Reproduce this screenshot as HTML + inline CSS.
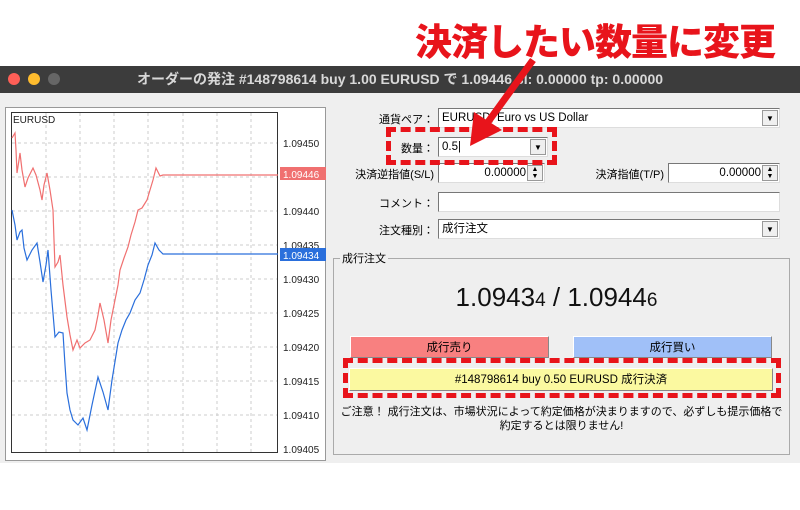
<!DOCTYPE html>
<html><head><meta charset="utf-8"><style>
*{margin:0;padding:0;box-sizing:border-box}
body{width:800px;height:510px;background:#fff;position:relative;overflow:hidden;font-family:"Liberation Sans","Noto Sans CJK JP",sans-serif;}
.a{position:absolute}
.head{left:415px;top:12px;font-size:37px;font-weight:900;color:#e8141b;letter-spacing:-1px;white-space:nowrap;font-family:"Noto Sans CJK JP",sans-serif}
.title{left:0;top:66px;width:800px;height:27px;background:#3c3c3c;color:#d8d8d8;font-size:14px;font-weight:bold;line-height:27px;text-align:center;padding-left:0;white-space:nowrap}
.dot{width:12px;height:12px;border-radius:50%;top:73px}
.win{left:0;top:93px;width:800px;height:370px;background:#efefef}
.fld{background:#fff;border:1px solid #777;border-right-color:#ddd;border-bottom-color:#ddd;height:20px;font-size:11.5px;line-height:18px;padding-left:3px}
.lbl{font-size:11px;text-align:right;white-space:nowrap}
.dd{position:absolute;right:1px;top:1px;width:16px;height:16px;background:#efefef;border:1px solid #999;font-size:8px;text-align:center;line-height:15px}
.btn{font-size:11.5px;text-align:center;border:1px solid #888;border-top-color:#fff;border-left-color:#fff}
.dash{border:5px dashed #e8141b}
</style></head><body>
<div class="a head">決済したい数量に変更</div>
<div class="a title">オーダーの発注 #148798614 buy 1.00 EURUSD で 1.09446 sl: 0.00000 tp: 0.00000</div>
<div class="a dot" style="left:8px;background:#fe5f57"></div>
<div class="a dot" style="left:28px;background:#febc2e"></div>
<div class="a dot" style="left:48px;background:#666"></div>
<div class="a win"></div>
<div class="a" style="left:5px;top:107px;width:321px;height:354px;background:#fff;border:1px solid #999"></div>
<svg class="a" style="left:0;top:0" width="330" height="470">
<g stroke="#ccc" stroke-dasharray="3,3">
<line x1="46" y1="113" x2="46" y2="452"/><line x1="80" y1="113" x2="80" y2="452"/><line x1="114" y1="113" x2="114" y2="452"/><line x1="148" y1="113" x2="148" y2="452"/><line x1="183" y1="113" x2="183" y2="452"/><line x1="217" y1="113" x2="217" y2="452"/><line x1="251" y1="113" x2="251" y2="452"/>
<line x1="12" y1="143" x2="277" y2="143"/><line x1="12" y1="177" x2="277" y2="177"/><line x1="12" y1="211" x2="277" y2="211"/><line x1="12" y1="245" x2="277" y2="245"/><line x1="12" y1="279" x2="277" y2="279"/><line x1="12" y1="313" x2="277" y2="313"/><line x1="12" y1="347" x2="277" y2="347"/><line x1="12" y1="381" x2="277" y2="381"/><line x1="12" y1="415" x2="277" y2="415"/>
</g>
<rect x="11.5" y="112.5" width="266" height="340" fill="none" stroke="#333"/>
<polyline fill="none" stroke="#f07070" stroke-width="1.2" points="12,138 15,133 16,150 17,173 19,160 20,153 22,170 25,187 28,178 33,168 36,175 40,190 42,200 44,185 47,173 50,190 53,210 54,240 55,267 58,262 60,255 63,285 67,317 70,335 73,350 77,340 80,348 85,343 90,340 95,330 98,315 100,303 104,320 108,343 111,320 115,300 118,285 120,270 124,258 128,247 131,235 135,222 138,210 142,208 147,200 150,190 153,180 156,168 160,176 163,175 278,175"/>
<polyline fill="none" stroke="#2a6fdc" stroke-width="1.2" points="12,210 15,225 17,240 20,232 22,230 24,248 27,260 32,250 37,243 40,262 43,282 46,265 48,250 51,290 55,337 59,332 63,333 65,365 67,393 70,410 73,420 78,425 83,418 87,430 92,405 98,377 103,392 108,410 112,380 118,343 122,330 126,320 130,313 135,300 140,293 144,280 148,265 152,255 155,243 159,250 163,254 278,254"/>
<g font-size="10" fill="#222" font-family="Liberation Sans">
<text x="13" y="123">EURUSD</text>
<text x="283" y="147">1.09450</text><text x="283" y="215">1.09440</text><text x="283" y="249">1.09435</text><text x="283" y="283">1.09430</text><text x="283" y="317">1.09425</text><text x="283" y="351">1.09420</text><text x="283" y="385">1.09415</text><text x="283" y="419">1.09410</text><text x="283" y="453">1.09405</text>
</g>
<rect x="280" y="167" width="46" height="13" fill="#f07070"/><text x="283" y="178" font-size="10" fill="#fff">1.09446</text>
<rect x="280" y="248" width="46" height="13" fill="#2a6fdc"/><text x="283" y="259" font-size="10" fill="#fff">1.09434</text>
</svg>
<div class="a lbl" style="left:340px;top:111px;width:94px">通貨ペア：</div>
<div class="a fld" style="left:438px;top:108px;width:342px">EURUSD, Euro vs US Dollar<div class="dd">▼</div></div>
<div class="a lbl" style="left:340px;top:140px;width:94px">数量：</div>
<div class="a fld" style="left:438px;top:137px;width:110px">0.5|<div class="dd">▼</div></div>
<div class="a lbl" style="left:336px;top:166px;width:98px">決済逆指値(S/L)</div>
<div class="a fld" style="left:438px;top:163px;width:107px;text-align:right;padding-right:18px">0.00000<div class="dd" style="font-size:7px;line-height:7px">▲<br>▼</div></div>
<div class="a lbl" style="left:570px;top:166px;width:94px">決済指値(T/P)</div>
<div class="a fld" style="left:668px;top:163px;width:112px;text-align:right;padding-right:18px">0.00000<div class="dd" style="font-size:7px;line-height:7px">▲<br>▼</div></div>
<div class="a lbl" style="left:340px;top:195px;width:94px">コメント：</div>
<div class="a fld" style="left:438px;top:192px;width:342px"></div>
<div class="a lbl" style="left:340px;top:222px;width:94px">注文種別：</div>
<div class="a fld" style="left:438px;top:219px;width:342px">成行注文<div class="dd">▼</div></div>
<div class="a" style="left:333px;top:258px;width:457px;height:197px;border:1px solid #aaa"></div>
<div class="a" style="left:340px;top:250px;background:#efefef;font-size:11px;padding:0 2px">成行注文</div>
<div class="a" style="left:328px;top:282px;width:457px;text-align:center;font-size:26px;color:#111">1.0943<span style="font-size:19px">4</span> / 1.0944<span style="font-size:19px">6</span></div>
<div class="a btn" style="left:350px;top:336px;width:199px;height:22px;background:#f88080;line-height:22px">成行売り</div>
<div class="a btn" style="left:573px;top:336px;width:199px;height:22px;background:#a0c0f8;line-height:22px">成行買い</div>
<div class="a btn" style="left:349px;top:368px;width:424px;height:23px;background:#fbf9a0;line-height:22px">#148798614 buy 0.50 EURUSD 成行決済</div>
<div class="a" style="left:333px;top:405px;width:457px;text-align:center;font-size:11px;line-height:14px;white-space:nowrap">ご注意！ 成行注文は、市場状況によって約定価格が決まりますので、必ずしも提示価格で<br>約定するとは限りません!</div>
<div class="a dash" style="left:343px;top:358px;width:438px;height:40px"></div>
<div class="a dash" style="left:386px;top:127px;width:171px;height:38px"></div>
<svg class="a" style="left:0;top:0" width="800" height="200">
<line x1="533" y1="60" x2="488" y2="122" stroke="#e8141b" stroke-width="7"/>
<polygon points="470,146 474,112 502,130" fill="#e8141b"/>
</svg>
</body></html>
